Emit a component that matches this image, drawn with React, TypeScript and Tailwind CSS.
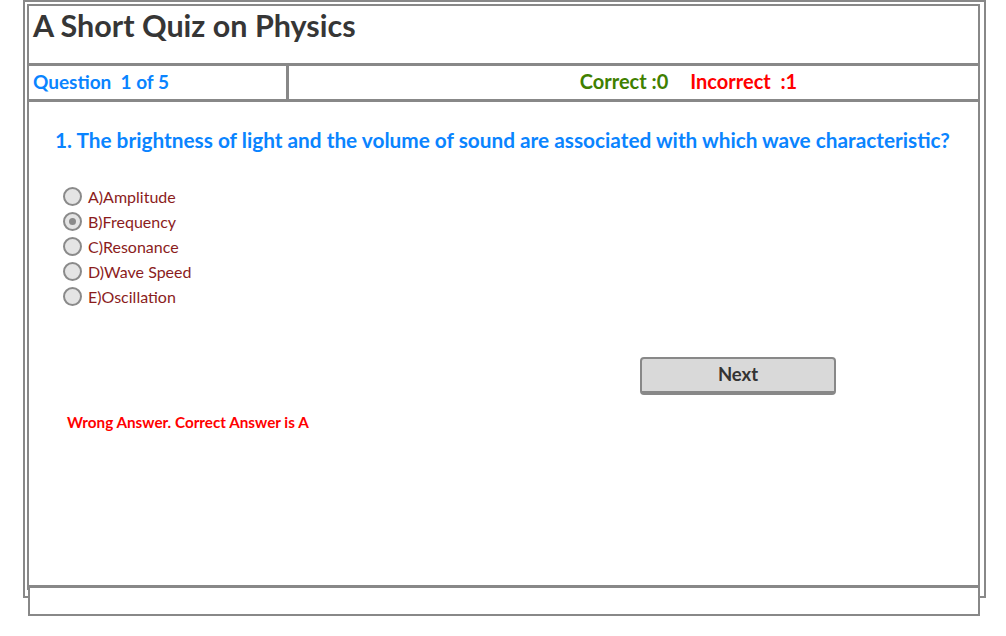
import { useState } from 'react';

const options = ['A)Amplitude', 'B)Frequency', 'C)Resonance', 'D)Wave Speed', 'E)Oscillation'];

function Radio({ checked }: { checked: boolean }) {
  return (
    <span className="flex h-[19px] w-[19px] shrink-0 items-center justify-center rounded-full border-2 border-[#8a8a8a] bg-[#e4e4e4]">
      {checked && <span className="h-[7px] w-[7px] rounded-full bg-[#8a8a8a]" />}
    </span>
  );
}

export default function App() {
  const [picked, setPicked] = useState(1);

  return (
    <div className="min-h-[636px] bg-white font-['Lato','Liberation_Sans',sans-serif]">
      <div className="ml-[23px] h-[598px] w-[963px] border-2 border-[#888] px-[2px] pt-[2px]">
        <div className="flex h-[586px] w-[953px] flex-col border-2 border-b-0 border-[#888]">
          <div className="h-[60px] border-b-[3px] border-[#888] px-[4px] pt-[1px]">
            <h1 className="text-[30.5px] font-bold leading-[36px] text-[#363636]">A Short Quiz on Physics</h1>
          </div>
          <div className="flex h-[36px] border-b-[3px] border-[#888]">
            <div className="flex w-[260px] items-center border-r-[3px] border-[#888] px-[4px] text-[19px] font-bold text-[#0a84ff]">
              Question&nbsp; 1 of 5
            </div>
            <div className="flex flex-1 items-center justify-center gap-[22px] pl-[110px] pb-[3px] text-[20px] font-bold">
              <span className="text-[#3f8000]">Correct :0</span>
              <span className="text-[#ff0000]">Incorrect&nbsp; :1</span>
            </div>
          </div>
          <div className="flex-1 px-[26px] pt-[22px]">
            <p className="text-[20.8px] font-bold text-[#0a84ff]">
              1. The brightness of light and the volume of sound are associated with which wave characteristic?
            </p>
            <ul className="mt-[29px] flex flex-col pl-[8px]">
              {options.map((o, i) => (
                <li
                  key={o}
                  onClick={() => setPicked(i)}
                  className="flex h-[25px] cursor-pointer items-center gap-[6px] text-[16px] text-[#8b1c1c]"
                >
                  <Radio checked={picked === i} />
                  <span>{o}</span>
                </li>
              ))}
            </ul>
            <div className="mt-[48px] flex pl-[585px]">
              <button className="h-[38px] w-[196px] rounded-[4px] border-2 border-b-[4px] border-[#888] bg-[#d9d9d9] text-[18.5px] font-bold text-[#333]">
                Next
              </button>
            </div>
            <p className="mt-[16px] pl-[12px] text-[15.25px] font-bold text-[#ff0000]">Wrong Answer. Correct Answer is A</p>
          </div>
        </div>
      </div>
      <div className="-mt-[13px] ml-[28px] h-[31px] w-[952px] border-2 border-t-[3px] border-[#888] bg-white" />
    </div>
  );
}
